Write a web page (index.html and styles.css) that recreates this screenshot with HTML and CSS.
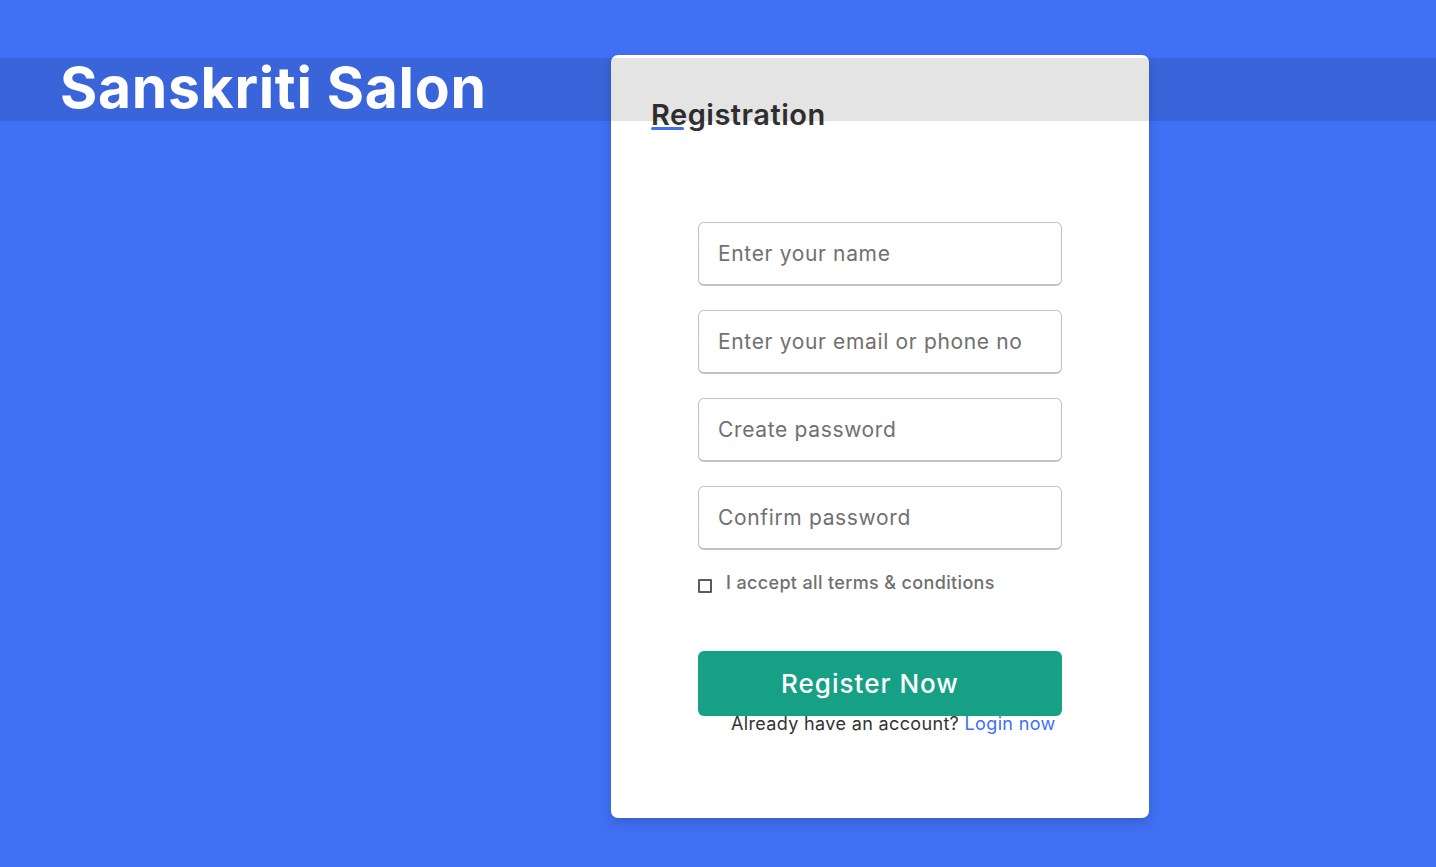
FILE: index.html
```html
<!DOCTYPE html>
<html lang="en">
<head>
<meta charset="utf-8">
<title>Sanskriti Salon - Registration</title>
<link rel="stylesheet" href="styles.css">
</head>
<body>
<header class="topbar">
  <h1 class="brand">Sanskriti Salon</h1>
</header>
<main class="page">
  <section class="card">
    <h2 class="title">Registration</h2>
    <form class="form">
      <input class="field" type="text" placeholder="Enter your name">
      <input class="field" type="text" placeholder="Enter your email or phone no">
      <input class="field" type="password" placeholder="Create password">
      <input class="field" type="password" placeholder="Confirm password">
      <label class="terms">
        <input class="check" type="checkbox">
        <span>I accept all terms &amp; conditions</span>
      </label>
      <button class="btn" type="button">Register Now</button>
      <p class="login">Already have an account? <a href="#" class="login-link">Login now</a></p>
    </form>
  </section>
</main>
</body>
</html>
```
FILE: styles.css
```css
* { box-sizing: border-box; }

html, body {
  margin: 0;
  padding: 0;
}

body {
  background: #4070f4;
  font-family: "Inter", "Noto Sans", sans-serif;
  min-height: 867px;
  position: relative;
}

.topbar {
  position: absolute;
  top: 58px;
  left: 0;
  right: 0;
  height: 63px;
  background: rgba(0, 0, 0, 0.105);
  z-index: 2;
  pointer-events: none;
}

.brand {
  margin: 0;
  padding-left: 60px;
  color: #fff;
  font-size: 57px;
  font-weight: 700;
  line-height: 60px;
  letter-spacing: 0.7px;
}

.page {
  display: flex;
  padding: 55px 0 0 611px;
}

.card {
  width: 538px;
  height: 763px;
  background: #fff;
  border-radius: 7px;
  box-shadow: 0 5px 12px rgba(0, 0, 0, 0.16);
  padding: 43px 0 0 40px;
}

.title {
  position: relative;
  margin: 0;
  font-size: 29px;
  font-weight: 600;
  line-height: 34px;
  letter-spacing: 0.5px;
  color: #333;
}

.title::after {
  content: "";
  position: absolute;
  left: 0;
  bottom: 2px;
  width: 33px;
  height: 3px;
  border-radius: 2px;
  background: #4070f4;
}

.form {
  display: flex;
  flex-direction: column;
  width: 364px;
  margin: 90px 0 0 47px;
}

.field {
  height: 64px;
  width: 100%;
  margin: 0 0 24px;
  padding: 0 19px;
  border: 1px solid #c7bebe;
  border-bottom-width: 2px;
  border-radius: 6px;
  font-family: inherit;
  font-size: 21px;
  letter-spacing: 0.65px;
  color: #333;
  outline: none;
}

.field:last-of-type { margin-bottom: 0; }

.field::placeholder { color: #707070; }

.terms {
  display: flex;
  align-items: flex-start;
  gap: 14px;
  margin-top: 23px;
  font-size: 18px;
  font-weight: 500;
  line-height: 20px;
  letter-spacing: 0.35px;
  color: #707070;
}

.check {
  appearance: none;
  -webkit-appearance: none;
  flex: none;
  width: 14px;
  height: 14px;
  margin: 6px 0 0;
  border: 2px solid #5c5c5c;
  border-radius: 1px;
  background: #fff;
}

.btn {
  height: 65px;
  width: 100%;
  margin-top: 58px;
  padding: 0 20px 0 0;
  border: none;
  border-radius: 6px;
  background: #16a085;
  color: #fff;
  font-family: inherit;
  font-size: 26px;
  font-weight: 500;
  letter-spacing: 1px;
  cursor: pointer;
}

.login {
  margin: 0;
  padding-left: 33px;
  font-size: 18px;
  line-height: 16px;
  letter-spacing: 0.35px;
  color: #333;
  white-space: nowrap;
}

.login-link {
  color: #4070f4;
  text-decoration: none;
}
```
